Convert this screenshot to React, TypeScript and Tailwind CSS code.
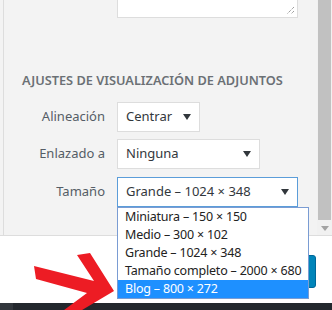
import React from "react";

const Caret = () => (
  <svg width="8" height="6" viewBox="0 0 8 6" className="shrink-0">
    <path d="M0 0 H8 L4 6 Z" fill="#32373c" />
  </svg>
);

type SelectProps = {
  value: string;
  width: string;
  focused?: boolean;
};

const FakeSelect = ({ value, width, focused }: SelectProps) => (
  <div
    className={`h-[30px] ${width} bg-white border flex items-center justify-between pl-[8px] pr-[8px] text-[13px] text-[#32373c] ${
      focused ? "border-[#5b9dd9]" : "border-[#dddddd]"
    }`}
  >
    <span>{value}</span>
    <Caret />
  </div>
);

const Row = ({ label, children }: { label: string; children: React.ReactNode }) => (
  <div className="flex items-center">
    <div className="w-[101px] text-right text-[13px] text-[#555d66]">{label}</div>
    <div className="ml-[12px]">{children}</div>
  </div>
);

const options = [
  "Miniatura – 150 × 150",
  "Medio – 300 × 102",
  "Grande – 1024 × 348",
  "Tamaño completo – 2000 × 680",
  "Blog – 800 × 272",
];

export default function App() {
  return (
    <div
      className="relative w-[332px] h-[310px] overflow-hidden flex flex-col bg-white"
      style={{ fontFamily: '"Noto Sans", "Open Sans", sans-serif' }}
    >
      {/* panel + scrollbar */}
      <div className="flex h-[236px] border-b border-[#dddddd] bg-[#f3f3f3]">
        <div className="flex-1 pl-[3px]">
          <div className="h-full border-l border-[#dddddd]">
            <div className="relative ml-[113px] w-[181px] h-[18px] bg-white border border-t-0 border-[#dddddd]">
              <svg width="9" height="9" viewBox="0 0 9 9" className="absolute right-[2px] bottom-[2px]">
                <path d="M8 1 L1 8 M8 5 L5 8" stroke="#777" strokeWidth="1" strokeDasharray="1 1" />
              </svg>
            </div>
            <h2 className="mt-[54px] ml-[18px] h-[16px] leading-[16px] text-[12.75px] font-semibold uppercase text-[#6b7075] whitespace-nowrap">
              Ajustes de visualización de adjuntos
            </h2>
            <div className="mt-[14px] flex flex-col gap-[7px]">
              <Row label="Alineación">
                <FakeSelect value="Centrar" width="w-[83px]" />
              </Row>
              <Row label="Enlazado a">
                <FakeSelect value="Ninguna" width="w-[143px]" />
              </Row>
              <div className="mt-[1px]">
                <Row label="Tamaño">
                  <FakeSelect value="Grande – 1024 × 348" width="w-[181px]" focused />
                </Row>
              </div>
            </div>
          </div>
        </div>
        <div className="w-[15px] bg-[#f1f1f1] flex flex-col items-center">
          <div className="w-[13px] h-[220px] bg-[#c1c1c1]" />
          <svg width="8" height="5" viewBox="0 0 8 5" className="mt-[6px]">
            <path d="M0 0 H8 L4 5 Z" fill="#a3a3a3" />
          </svg>
        </div>
      </div>

      {/* bottom toolbar */}
      <div className="flex-1 flex justify-end pt-[19px] pr-[16px]">
        <div className="w-[60px] h-[33px] rounded-[3px] bg-[#0085ba] border border-[#006799]" />
      </div>
      <div className="h-[7px] flex">
        <div className="w-[13px] bg-[#32373c]" />
        <div className="flex-1 bg-[#23282d]" />
      </div>

      {/* open dropdown list */}
      <div className="absolute left-[117px] top-[207px] w-[192px] bg-white border border-[#7a9cd3]">
        {options.map((o, i) => (
          <div
            key={o}
            className={`h-[18px] leading-[18px] pl-[7px] text-[12.5px] tracking-[-0.2px] whitespace-nowrap ${
              i === options.length - 1 ? "bg-[#1e90ff] text-white" : "text-[#222222]"
            }`}
          >
            {o}
          </div>
        ))}
      </div>

      {/* red annotation arrow */}
      <svg className="absolute inset-0 pointer-events-none" width="332" height="310" viewBox="0 0 332 310">
        <polygon
          points="34,266 94,281 77,255 90,253 114,291 72,316 56,316 87,293 36,279"
          fill="#ed1c24"
        />
      </svg>
    </div>
  );
}
